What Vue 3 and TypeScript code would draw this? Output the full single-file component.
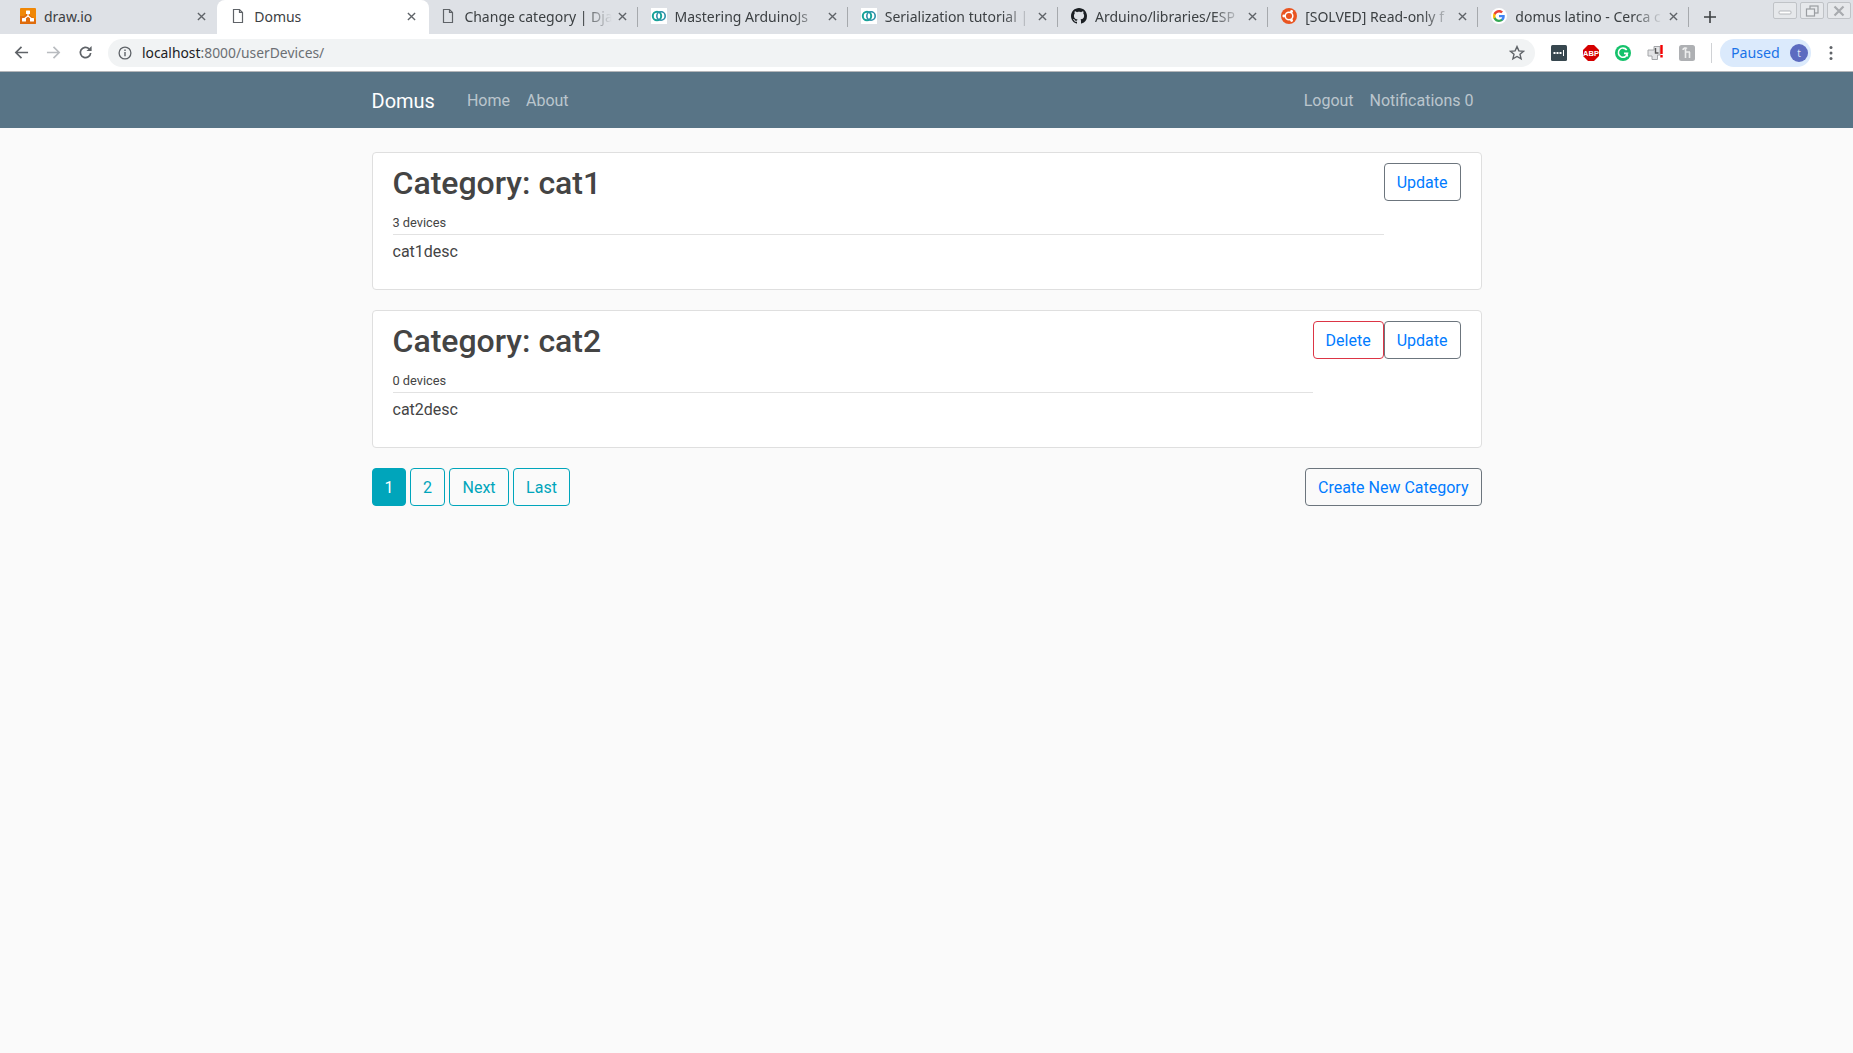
<template>
  <div class="page">
    <div class="tabstrip">
      <div
        v-for="(tab, i) in tabs"
        :key="tab.title"
        class="tab"
        :class="{ active: i === 1 }"
      >
        <svg class="favicon" viewBox="0 0 16 16">
          <template v-if="tab.icon === 'drawio'">
            <rect width="16" height="16" rx="1" fill="#f08705" />
            <path d="M0 16V8l4 0 3-3 9 7v3a1 1 0 0 1-1 1z" fill="#df6c0c" />
            <path d="M8 5v3M8 8L4 11M8 8l4 3" stroke="#fff" stroke-width="1.2" fill="none" />
            <rect x="6" y="2.500" width="4" height="3.500" rx=".5" fill="#fff" />
            <rect x="2" y="10" width="4" height="3.500" rx=".5" fill="#fff" />
            <rect x="10" y="10" width="4" height="3.500" rx=".5" fill="#fff" />
          </template>
          <template v-else-if="tab.icon === 'page'">
            <path d="M3.500 1.500h6l3 3v10h-9z M9.500 1.500v3h3" fill="none" stroke="#5f6368" stroke-width="1.2" />
          </template>
          <template v-else-if="tab.icon === 'arduinojson'">
            <rect width="16" height="16" fill="#fff" />
            <circle cx="6" cy="8" r="4.200" fill="none" stroke="#17a398" stroke-width="2" />
            <circle cx="10" cy="8" r="4.200" fill="none" stroke="#2a8fa8" stroke-width="1.600" />
          </template>
          <template v-else-if="tab.icon === 'github'">
            <path
              fill="#1b1f23"
              fill-rule="evenodd"
              d="M8 0C3.58 0 0 3.58 0 8c0 3.54 2.29 6.53 5.47 7.59.4.07.55-.17.55-.38 0-.19-.01-.82-.01-1.49-2.01.37-2.53-.49-2.69-.94-.09-.23-.48-.94-.82-1.13-.28-.15-.68-.52-.01-.53.63-.01 1.08.58 1.23.82.72 1.21 1.87.87 2.33.66.07-.52.28-.87.51-1.07-1.78-.2-3.64-.89-3.64-3.95 0-.87.31-1.59.82-2.15-.08-.2-.36-1.02.08-2.12 0 0 .67-.21 2.2.82.64-.18 1.32-.27 2-.27s1.36.09 2 .27c1.53-1.04 2.2-.82 2.2-.82.44 1.1.16 1.92.08 2.12.51.56.82 1.27.82 2.15 0 3.07-1.87 3.75-3.65 3.95.29.25.54.73.54 1.48 0 1.07-.01 1.93-.01 2.2 0 .21.15.46.55.38A8.013 8.013 0 0 0 16 8c0-4.42-3.58-8-8-8z"
            />
          </template>
          <template v-else-if="tab.icon === 'ubuntu'">
            <circle cx="8" cy="8" r="8" fill="#e95420" />
            <circle cx="8" cy="8" r="3.800" fill="none" stroke="#fff" stroke-width="1.500" />
            <circle cx="2.800" cy="8" r="1.400" fill="#fff" />
            <circle cx="10.600" cy="3.500" r="1.400" fill="#fff" />
            <circle cx="10.600" cy="12.500" r="1.400" fill="#fff" />
          </template>
          <template v-else>
            <circle cx="8" cy="8" r="8" fill="#fff" />
            <g transform="translate(2 2) scale(.5)">
              <path fill="#4285f4" d="M23.500 12.300c0-.8-.1-1.600-.2-2.300H12v4.400h6.500c-.3 1.500-1.100 2.700-2.400 3.600v3h3.900c2.200-2.100 3.500-5.100 3.500-8.700z" />
              <path fill="#34a853" d="M12 24c3.200 0 6-1.100 8-2.900l-3.900-3c-1.100.7-2.500 1.200-4.100 1.200-3.100 0-5.800-2.100-6.700-5H1.200v3.100C3.200 21.300 7.300 24 12 24z" />
              <path fill="#fbbc05" d="M5.300 14.300c-.3-.7-.4-1.500-.4-2.300s.1-1.600.4-2.300V6.600H1.200C.4 8.200 0 10 0 12s.4 3.800 1.200 5.400z" />
              <path fill="#ea4335" d="M12 4.800c1.800 0 3.300.6 4.600 1.800l3.400-3.400C18 1.200 15.200 0 12 0 7.300 0 3.200 2.700 1.200 6.600l4.100 3.100c.9-2.800 3.600-4.900 6.700-4.900z" />
            </g>
          </template>
        </svg>
        <span class="tab-title" :class="{ fade: tab.fade }">{{ tab.title }}</span>
        <svg class="tab-close" viewBox="0 0 10 10">
          <path d="M1 1l8 8M9 1L1 9" stroke="#5f6368" stroke-width="1.500" />
        </svg>
      </div>
      <svg class="new-tab" viewBox="0 0 12 12">
        <path d="M6 0v12M0 6h12" stroke="#3c4043" stroke-width="1.600" />
      </svg>
      <div class="win-controls">
        <div class="win-btn">
          <svg viewBox="0 0 14 10" width="14" height="10"><rect x="1" y="5" width="12" height="3" rx="1" fill="#fff" stroke="#b4b7bb" /></svg>
        </div>
        <div class="win-btn">
          <svg viewBox="0 0 14 12" width="14" height="12">
            <rect x="5" y="1" width="8" height="7" fill="none" stroke="#9a9da1" stroke-width="1.200" />
            <rect x="1.500" y="4" width="8" height="7" fill="#eceef0" stroke="#9a9da1" stroke-width="1.200" />
          </svg>
        </div>
        <div class="win-btn">
          <svg viewBox="0 0 12 12" width="12" height="12"><path d="M1.500 1.500l9 9M10.500 1.500l-9 9" stroke="#a8abaf" stroke-width="2.200" /></svg>
        </div>
      </div>
    </div>

    <div class="toolbar">
      <svg class="nav-icon" viewBox="0 0 16 16"><path d="M15 8H2M8 2L2 8l6 6" fill="none" stroke="#5f6368" stroke-width="1.800" /></svg>
      <svg class="nav-icon" viewBox="0 0 16 16"><path d="M1 8h13M8 2l6 6-6 6" fill="none" stroke="#b9bcc0" stroke-width="1.800" /></svg>
      <svg class="nav-icon" viewBox="0 0 16 16">
        <path d="M13.500 8.500a5.500 5.500 0 1 1-1.600-4.400" fill="none" stroke="#5f6368" stroke-width="1.800" />
        <path d="M14.500 1v5.500H9z" fill="#5f6368" />
      </svg>
      <div class="omnibox">
        <svg class="info" viewBox="0 0 14 14">
          <circle cx="7" cy="7" r="5.900" fill="none" stroke="#5f6368" stroke-width="1.300" />
          <path d="M7 6v4.200M7 3.600v1.400" stroke="#5f6368" stroke-width="1.400" />
        </svg>
        <span class="url"><b>localhost</b>:8000/userDevices/</span>
        <svg class="star" viewBox="0 0 16 16">
          <path d="M8 1.600l1.900 4.300 4.600.4-3.500 3 1.100 4.600L8 11.500l-4.100 2.400L5 9.300l-3.500-3 4.600-.4z" fill="none" stroke="#5f6368" stroke-width="1.400" />
        </svg>
      </div>
      <div class="extensions">
        <svg class="ext" viewBox="0 0 16 16">
          <rect width="16" height="16" rx="1.500" fill="#37474f" />
          <path d="M2.500 7h2v2h-2zM5.500 7h2v2h-2zM8.500 7h2v2h-2z" fill="#fff" />
          <path d="M12.500 5v6" stroke="#fff" stroke-width="1" />
        </svg>
        <svg class="ext" viewBox="0 0 16 16">
          <path d="M5 0h6l5 5v6l-5 5H5l-5-5V5z" fill="#d50000" />
          <text x="8" y="10.800" text-anchor="middle" class="abp">ABP</text>
        </svg>
        <svg class="ext" viewBox="0 0 16 16">
          <circle cx="8" cy="8" r="8" fill="#15c26b" />
          <path d="M11.700 5a4.600 4.600 0 1 0 .8 3.400H9" fill="none" stroke="#fff" stroke-width="1.600" />
          <path d="M11 8.400l1.800 3" stroke="#fff" stroke-width="1.400" />
        </svg>
        <svg class="ext" viewBox="0 0 16 16">
          <path d="M5 5h2V1.500h6V10h-2.500v4.500H5V11H1V5z" fill="#e2e3e5" stroke="#a4a6a9" stroke-width="1" />
          <path d="M8.500 3v5h3" fill="none" stroke="#555" stroke-width="1.400" />
          <path d="M14.500 0v9" stroke="#f40000" stroke-width="2.400" />
          <path d="M14.500 10v2.500" stroke="#f40000" stroke-width="2.400" />
        </svg>
        <svg class="ext" viewBox="0 0 16 16">
          <rect width="16" height="16" rx="2.500" fill="#aeb0b3" />
          <path d="M4 5c0-2 3-2.500 4-1.500M6.500 3v10M6.500 7h4.500M10.500 7v6" fill="none" stroke="#eceded" stroke-width="1.600" />
        </svg>
      </div>
      <div class="divider"></div>
      <div class="profile">
        <span class="paused">Paused</span>
        <span class="avatar">t</span>
      </div>
      <svg class="menu" viewBox="0 0 4 16">
        <circle cx="2" cy="2.500" r="1.500" fill="#5f6368" />
        <circle cx="2" cy="8" r="1.500" fill="#5f6368" />
        <circle cx="2" cy="13.500" r="1.500" fill="#5f6368" />
      </svg>
    </div>

    <nav class="navbar">
      <div class="container nav-inner">
        <a class="brand">Domus</a>
        <a class="nav-link">Home</a>
        <a class="nav-link">About</a>
        <span class="spacer"></span>
        <a class="nav-link">Logout</a>
        <a class="nav-link">Notifications 0</a>
      </div>
    </nav>

    <main class="container content">
      <section v-for="cat in categories" :key="cat.name" class="card">
        <div class="card-text">
          <h2 class="card-title">Category: {{ cat.name }}</h2>
          <small class="count">{{ cat.devices }} devices</small>
          <hr class="rule" />
          <p class="desc">{{ cat.desc }}</p>
        </div>
        <div class="card-actions">
          <a v-if="cat.devices === 0" class="btn btn-danger">Delete</a>
          <a class="btn btn-secondary">Update</a>
        </div>
      </section>

      <div class="footer-row">
        <div class="pages">
          <a v-for="(p, i) in pages" :key="p" class="page-btn" :class="{ current: i === 0 }">{{ p }}</a>
        </div>
        <a class="btn btn-secondary">Create New Category</a>
      </div>
    </main>
  </div>
</template>

<script setup lang="ts">
interface Tab {
  title: string;
  icon: string;
  fade: boolean;
}

const tabs: Tab[] = [
  { title: 'draw.io', icon: 'drawio', fade: false },
  { title: 'Domus', icon: 'page', fade: false },
  { title: 'Change category | Dja', icon: 'page', fade: true },
  { title: 'Mastering ArduinoJs', icon: 'arduinojson', fade: true },
  { title: 'Serialization tutorial |', icon: 'arduinojson', fade: true },
  { title: 'Arduino/libraries/ESP', icon: 'github', fade: true },
  { title: '[SOLVED] Read-only f', icon: 'ubuntu', fade: true },
  { title: 'domus latino - Cerca c', icon: 'google', fade: true },
];

const categories = [
  { name: 'cat1', devices: 3, desc: 'cat1desc' },
  { name: 'cat2', devices: 0, desc: 'cat2desc' },
];

const pages = ['1', '2', 'Next', 'Last'];
</script>

<style>
html,
body {
  margin: 0;
  background: #fafafa;
}
</style>

<style scoped>
.page {
  min-height: 1053px;
  background: #fafafa;
  font-family: Roboto, "Liberation Sans", sans-serif;
  color: #444;
}

/* browser chrome */
.tabstrip {
  height: 34px;
  background: #dee1e6;
  display: flex;
  padding-left: 7px;
  position: relative;
}

.tab {
  width: 210.2px;
  box-sizing: border-box;
  height: 34px;
  display: flex;
  align-items: center;
  padding: 0 11px 2px 13px;
  position: relative;
  flex: none;
  font-family: "Noto Sans", sans-serif;
  font-size: 14px;
  color: #3c4043;
}

.tab:not(:first-child):not(.active)::after {
  content: "";
  position: absolute;
  right: 0;
  top: 7px;
  height: 20px;
  width: 1px;
  background: #a6a9ad;
}

.tab.active {
  background: #fff;
  border-radius: 8px 8px 0 0;
  width: 212.2px;
  margin-right: -2px;
  padding-right: 13px;
}

.favicon {
  width: 16px;
  height: 16px;
  flex: none;
  margin-right: 8px;
}

.tab-title {
  flex: 1;
  min-width: 0;
  white-space: nowrap;
  overflow: hidden;
}

.tab-title.fade {
  -webkit-mask-image: linear-gradient(to right, #000 80%, transparent 100%);
  mask-image: linear-gradient(to right, #000 80%, transparent 100%);
}

.tab-close {
  width: 9px;
  height: 9px;
  flex: none;
  margin-left: 6px;
}

.new-tab {
  width: 12px;
  height: 12px;
  margin: 11px 0 0 15px;
}

.win-controls {
  position: absolute;
  top: 2px;
  right: 2px;
  display: flex;
  gap: 3px;
}

.win-btn {
  width: 22px;
  height: 15px;
  border: 1px solid #c0c3c7;
  border-radius: 2px;
  background: #e6e8eb;
  display: flex;
  align-items: center;
  justify-content: center;
}

.toolbar {
  height: 38px;
  box-sizing: border-box;
  background: #fff;
  border-bottom: 1px solid #b4b6b9;
  display: flex;
  align-items: center;
  padding-left: 14px;
}

.nav-icon {
  width: 15px;
  height: 15px;
  flex: none;
  margin-right: 17px;
}

.nav-icon:nth-child(3) {
  margin-right: 15px;
}

.omnibox {
  width: 1427px;
  height: 28px;
  border-radius: 14px;
  background: #f1f3f4;
  display: flex;
  align-items: center;
  padding: 0 10px;
  box-sizing: border-box;
  flex: none;
}

.info {
  width: 14px;
  height: 14px;
  flex: none;
  margin-right: 10px;
}

.url {
  flex: 1;
  font-family: "Noto Sans", sans-serif;
  font-size: 13.85px;
  color: #6b6f73;
}

.url b {
  font-weight: 400;
  color: #202124;
}

.star {
  width: 16px;
  height: 16px;
  flex: none;
}

.extensions {
  display: flex;
  gap: 16px;
  margin-left: 16px;
}

.ext {
  width: 16px;
  height: 16px;
  flex: none;
}

.abp {
  font-family: "Liberation Sans", sans-serif;
  font-size: 7.5px;
  font-weight: 700;
  fill: #fff;
}

.divider {
  width: 1px;
  height: 20px;
  background: #d0d2d5;
  margin: 0 8px 0 16px;
}

.profile {
  width: 91px;
  height: 28px;
  box-sizing: border-box;
  border-radius: 14px;
  background: #dbeafc;
  display: flex;
  align-items: center;
  justify-content: space-between;
  padding: 0 3px 0 11px;
}

.paused {
  font-family: "Noto Sans", sans-serif;
  font-size: 14.2px;
  color: #1a73e8;
}

.avatar {
  width: 18px;
  height: 18px;
  border-radius: 50%;
  background: #5c6bc0;
  color: #dfe3f5;
  font-family: "Noto Sans", sans-serif;
  font-size: 10px;
  display: flex;
  align-items: center;
  justify-content: center;
}

.menu {
  width: 4px;
  height: 16px;
  margin-left: 18px;
}

/* page */
.container {
  width: 1110px;
  margin: 0 auto;
}

.navbar {
  height: 56px;
  background: #587486;
}

.nav-inner {
  height: 100%;
  display: flex;
  align-items: center;
}

.brand {
  font-size: 20px;
  color: #fff;
  margin: 1px 32px 0 0;
}

.nav-link {
  font-size: 16px;
  color: rgba(255, 255, 255, 0.6);
  padding: 0 8px;
}

.brand + .nav-link {
  padding-left: 0;
}

.spacer {
  flex: 1;
}

.content {
  padding-top: 24px;
}

.card {
  height: 138px;
  box-sizing: border-box;
  margin-bottom: 20px;
  background: #fff;
  border: 1px solid #dfdfdf;
  border-radius: 4px;
  padding: 10px 20px;
  display: flex;
  align-items: flex-start;
}

.card-text {
  flex: 1;
  min-width: 0;
}

.card-title {
  margin: 1px 0 11px;
  font-size: 32px;
  line-height: 38px;
  font-weight: 500;
  color: #444;
}

.count {
  display: block;
  font-size: 12.8px;
  line-height: 19px;
}

.rule {
  border: 0;
  border-top: 1px solid #e2e2e2;
  margin: 2px 0 5px;
}

.desc {
  margin: 0;
  font-size: 16px;
  line-height: 24px;
}

.card-actions {
  display: flex;
  flex: none;
}

.btn {
  display: block;
  box-sizing: border-box;
  height: 38px;
  line-height: 37px;
  padding: 0 12px;
  border-radius: 4px;
  border: 1px solid #6c757d;
  font-size: 16px;
  color: #007bff;
}

.btn-danger {
  border-color: #dc3545;
}

.footer-row {
  display: flex;
  justify-content: space-between;
}

.pages {
  display: flex;
  gap: 4px;
}

.page-btn {
  box-sizing: border-box;
  height: 38px;
  line-height: 37px;
  padding: 0 12px 0 12.5px;
  border-radius: 4px;
  border: 1px solid #00a5bb;
  font-size: 16px;
  color: #00a5bb;
}

.page-btn.current {
  background: #00a5bb;
  color: #fff;
  padding: 0 11px 0 12px;
}
</style>
